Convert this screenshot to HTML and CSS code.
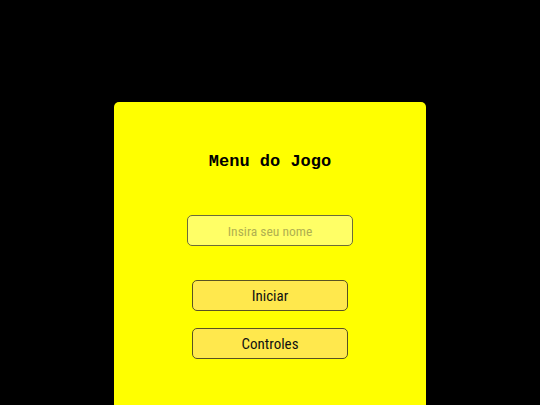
FILE: index.html
```html
<!DOCTYPE html>
<html lang="pt">
<head>
    <meta charset="UTF-8">
    <meta name="viewport" content="width=device-width, initial-scale=1.0">
    <title>Menu do Jogo</title>
    <link rel="stylesheet" href="styles.css">
</head>
<body>
    <div class="menu">
        <h1 class="title">Menu do Jogo</h1>
        <input type="text" class="name-input" placeholder="Insira seu nome">
        <div class="buttons">
            <button type="button" class="menu-btn">Iniciar</button>
            <button type="button" class="menu-btn">Controles</button>
        </div>
    </div>
</body>
</html>
```

FILE: styles.css
```css
body {
    margin: 0;
    padding: 0;
    background-color: #000;
    font-family: Roboto, "Liberation Sans", sans-serif;
    font-stretch: condensed;
    height: 405px;
    overflow: hidden;
}

.menu {
    width: 312px;
    height: 303px;
    margin: 102px auto 0;
    background: #ffff00;
    border-radius: 5px 5px 0 0;
    display: flex;
    flex-direction: column;
    align-items: center;
    box-sizing: border-box;
    padding-top: 49px;
}

.title {
    font-family: "Liberation Mono", "Courier New", monospace;
    font-stretch: normal;
    font-size: 17px;
    font-weight: bold;
    margin: 0;
    line-height: 22px;
    color: #000;
}

.name-input {
    margin-top: 42px;
    width: 166px;
    height: 31px;
    box-sizing: border-box;
    background: #ffff66;
    border: 1px solid #6b6b3a;
    border-radius: 5px;
    text-align: center;
    font-family: Roboto, "Liberation Sans", sans-serif;
    font-stretch: condensed;
    font-size: 13.5px;
    padding: 0 6px;
}

.name-input::placeholder {
    color: #b0b050;
}

.buttons {
    margin-top: 34px;
    display: flex;
    flex-direction: column;
    gap: 17px;
}

.menu-btn {
    width: 156px;
    height: 31px;
    box-sizing: border-box;
    background: #ffe84d;
    border: 1px solid #5a5222;
    border-radius: 5px;
    font-family: Roboto, "Liberation Sans", sans-serif;
    font-stretch: condensed;
    font-size: 15px;
    color: #111;
    cursor: pointer;
}

.menu-btn:hover {
    background: #ffdd22;
}
```
